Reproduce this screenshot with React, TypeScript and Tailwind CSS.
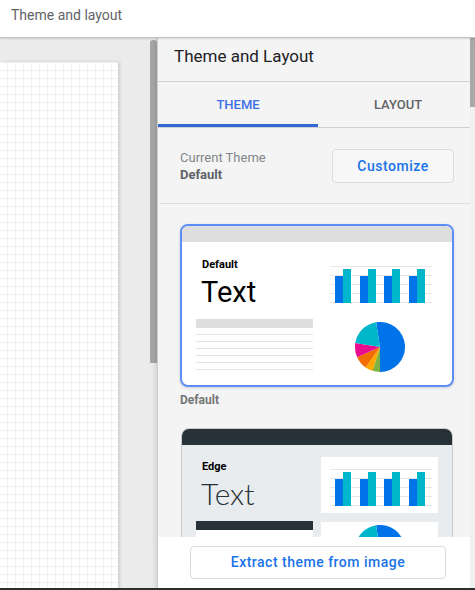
import React from "react";

function BarChart() {
  const xs = [5, 30, 54, 79];
  return (
    <svg width="102" height="37" viewBox="0 0 102 37" className="block">
      {[0, 9, 18, 27, 36].map((y) => (
        <rect key={y} x="0" y={y} width="102" height="1" fill="#e6e6e6" />
      ))}
      {xs.map((x) => (
        <g key={x}>
          <rect x={x} y="10" width="8" height="27" fill="#0073e8" />
          <rect x={x + 8} y="3" width="8" height="34" fill="#00b6cb" />
        </g>
      ))}
    </svg>
  );
}

function Pie() {
  return (
    <svg width="50" height="50" viewBox="0 0 50 50" className="block">
      <path d="M25 25 L21.09 0.31 A25 25 0 1 1 25 50 Z" fill="#0073e8" />
      <path d="M25 25 L25 50 A25 25 0 0 1 17.48 48.84 Z" fill="#7cb342" />
      <path d="M25 25 L17.48 48.84 A25 25 0 0 1 10.66 45.48 Z" fill="#ffa600" />
      <path d="M25 25 L10.66 45.48 A25 25 0 0 1 2.16 35.17 Z" fill="#f26d00" />
      <path d="M25 25 L2.16 35.17 A25 25 0 0 1 0.31 21.09 Z" fill="#ea0c8e" />
      <path d="M25 25 L0.31 21.09 A25 25 0 0 1 21.09 0.31 Z" fill="#00b6cb" />
    </svg>
  );
}

function TableLines({ header, body }: { header: string; body: string }) {
  return (
    <div className="flex flex-col">
      <div className={`h-[9px] ${header}`} />
      <div className={`flex flex-col ${body}`}>
        {[0, 1, 2, 3, 4, 5].map((i) => (
          <div key={i} className="h-px bg-[#e3e3e3] mt-[6px]" />
        ))}
      </div>
    </div>
  );
}

export default function App() {
  return (
    <div className="w-[475px] h-[590px] overflow-hidden flex flex-col bg-white font-['Roboto',sans-serif]">
      {/* top bar */}
      <div className="h-[38px] shrink-0 flex items-center pl-[11px] pb-[6px] text-[14px] text-[#5f6368] border-b border-[#c2c2c2] shadow-[0_1px_2px_rgba(0,0,0,0.12)] relative z-10">
        Theme and layout
      </div>

      <div className="flex flex-1 min-h-0">
        {/* left editor area */}
        <div className="w-[157px] shrink-0 bg-[#ebebeb] flex">
          <div className="w-[118px] mt-[24px] bg-white bg-[linear-gradient(to_right,#efefef_1px,transparent_1px),linear-gradient(to_bottom,#efefef_1px,transparent_1px)] [background-size:8px_8px] [background-position:7px_0px] shadow-[2px_0_3px_rgba(0,0,0,0.12)]" />
          <div className="flex-1" />
          <div className="w-[7px] flex flex-col">
            <div className="mt-[2px] h-[323px] bg-[#a6a6a6] rounded-t-[3px]" />
          </div>
        </div>

        {/* right panel */}
        <div className="w-[318px] shrink-0 flex border-l border-[#cdcdcd] bg-[#f4f4f4] shadow-[-2px_0_4px_rgba(0,0,0,0.1)]">
          <div className="flex-1 min-w-0 flex flex-col">
            <div className="h-[44px] shrink-0 flex items-center pl-[16px] pb-[6px] text-[17px] text-[#202124] border-b border-[#d0d0d0]">
              Theme and Layout
            </div>
            <div className="h-[46px] shrink-0 flex overflow-hidden border-b border-[#d0d0d0]">
              <div className="w-[160px] shrink-0 relative flex items-center justify-center text-[13px] font-medium text-[#3f6fe6]">
                THEME
                <div className="absolute left-0 right-0 bottom-0 h-[3px] bg-[#3367d6]" />
              </div>
              <div className="w-[160px] shrink-0 flex items-center justify-center text-[13px] font-medium text-[#5f6368]">
                LAYOUT
              </div>
            </div>
            <div className="h-[75px] shrink-0 flex items-center justify-between pl-[22px] pr-[16px]">
              <div className="flex flex-col text-[13px] leading-[17px] mt-[1px]">
                <span className="text-[#80868b]">Current Theme</span>
                <span className="font-bold text-[#5f6368]">Default</span>
              </div>
              <button className="w-[122px] h-[34px] mt-[1px] border border-[#dadce0] rounded-[4px] bg-[#f7f7f7] text-[14px] font-medium text-[#1a73e8] tracking-[0.5px]">
                Customize
              </button>
            </div>
            <div className="h-px shrink-0 ml-[2px] bg-[#dcdcdc]" />

            <div className="flex-1 min-h-0 overflow-hidden pt-[20px] pl-[22px] flex flex-col">
              {/* Default card */}
              <div className="w-[274px] h-[163px] shrink-0 border-2 border-[#5e8ef5] rounded-[8px] overflow-hidden bg-white flex flex-col shadow-[0_1px_3px_rgba(0,0,0,0.15)]">
                <div className="h-[16px] shrink-0 bg-[#dedede]" />
                <div className="flex flex-1 pl-[14px]">
                  <div className="w-[117px] flex flex-col pt-[16px]">
                    <span className="pl-[6px] text-[11px] leading-[14px] font-bold text-black">Default</span>
                    <span className="pl-[5px] mt-[3px] text-[29px] leading-[34px] text-black">Text</span>
                    <div className="mt-[10px]">
                      <TableLines header="bg-[#dedede]" body="bg-white" />
                    </div>
                  </div>
                  <div className="ml-[17px] w-[102px] flex flex-col items-center pt-[24px]">
                    <BarChart />
                    <div className="mt-[19px] -ml-[3px]">
                      <Pie />
                    </div>
                  </div>
                </div>
              </div>
              <span className="mt-[6px] text-[12px] leading-[14px] font-bold text-[#757575]">Default</span>

              {/* Edge card */}
              <div className="mt-[21px] ml-[1px] w-[272px] h-[200px] shrink-0 border border-[#c9c9c9] rounded-t-[8px] overflow-hidden bg-[#e9ecef] flex flex-col">
                <div className="h-[16px] shrink-0 bg-[#263238]" />
                <div className="flex flex-1 pl-[14px]">
                  <div className="w-[117px] flex flex-col pt-[15px]">
                    <span className="pl-[6px] text-[11px] leading-[14px] font-bold text-black">Edge</span>
                    <span className="pl-[5px] mt-[2px] text-[30px] leading-[34px] font-light text-[#263238] font-['Lato',sans-serif]">Text</span>
                    <div className="mt-[11px] flex flex-col">
                      <div className="h-[9px] bg-[#263238]" />
                      <div className="h-[60px] bg-white" />
                    </div>
                  </div>
                  <div className="ml-[8px] flex flex-col pt-[12px]">
                    <div className="w-[117px] h-[56px] bg-white pl-[9px] pt-[12px]">
                      <BarChart />
                    </div>
                    <div className="mt-[9px] w-[117px] h-[60px] bg-white flex justify-center pt-[3px]">
                      <Pie />
                    </div>
                  </div>
                </div>
              </div>
            </div>

            <div className="h-[51px] shrink-0 bg-white flex items-center pl-[32px]">
              <button className="w-[256px] h-[33px] border border-[#dadce0] rounded-[4px] bg-white text-[14px] font-medium text-[#1a73e8] tracking-[0.5px]">
                Extract theme from image
              </button>
            </div>
          </div>
          <div className="w-[5px] shrink-0 bg-[#f1f1f1] flex flex-col">
            <div className="h-[69px] bg-[#a8a8a8]" />
          </div>
        </div>
      </div>
      <div className="h-[2px] shrink-0 bg-[#2e2e2e]" />
    </div>
  );
}
